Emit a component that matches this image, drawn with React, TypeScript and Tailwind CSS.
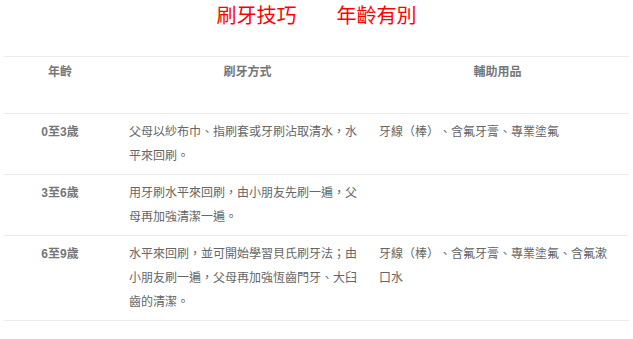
const rows = [
  {
    age: '0至3歲',
    method: '父母以紗布巾、指刷套或牙刷沾取清水，水平來回刷。',
    tools: '牙線（棒）、含氟牙膏、專業塗氟',
  },
  {
    age: '3至6歲',
    method: '用牙刷水平來回刷，由小朋友先刷一遍，父母再加強清潔一遍。',
    tools: '',
  },
  {
    age: '6至9歲',
    method: '水平來回刷，並可開始學習貝氏刷牙法；由小朋友刷一遍，父母再加強恆齒門牙、大臼齒的清潔。',
    tools: '牙線（棒）、含氟牙膏、專業塗氟、含氟漱口水',
  },
];

export default function App() {
  return (
    <div
      className="w-[633px] h-[339px] bg-white overflow-hidden [text-spacing-trim:space-all]"
      style={{ fontFamily: '"Liberation Sans", "Noto Sans CJK TC", sans-serif' }}
    >
      <h1 className="h-[56px] text-center text-[20px] leading-[32px] font-normal text-[#ff0000]">
        刷牙技巧　　年齡有別
      </h1>

      <div className="mx-1 text-[12px] text-[#666]">
        <div className="grid grid-cols-[125px_250px_250px] h-[57px] border-t border-[#ebebeb] text-[#777] font-bold leading-[24px]">
          <div className="pt-[3px] pr-[13px] text-center">年齡</div>
          <div className="pt-[3px] pr-[13px] text-center">刷牙方式</div>
          <div className="pt-[3px] pr-[13px] text-center">輔助用品</div>
        </div>

        {rows.map((row) => (
          <div
            key={row.age}
            className="grid grid-cols-[125px_250px_250px] border-t border-[#ebebeb] last:border-b leading-[24px]"
          >
            <div className="py-[6px] pr-[13px] text-center font-bold text-[#777]">{row.age}</div>
            <div className="py-[6px] pr-[13px]">{row.method}</div>
            <div className="py-[6px] pr-[13px]">{row.tools}</div>
          </div>
        ))}
      </div>
    </div>
  );
}
